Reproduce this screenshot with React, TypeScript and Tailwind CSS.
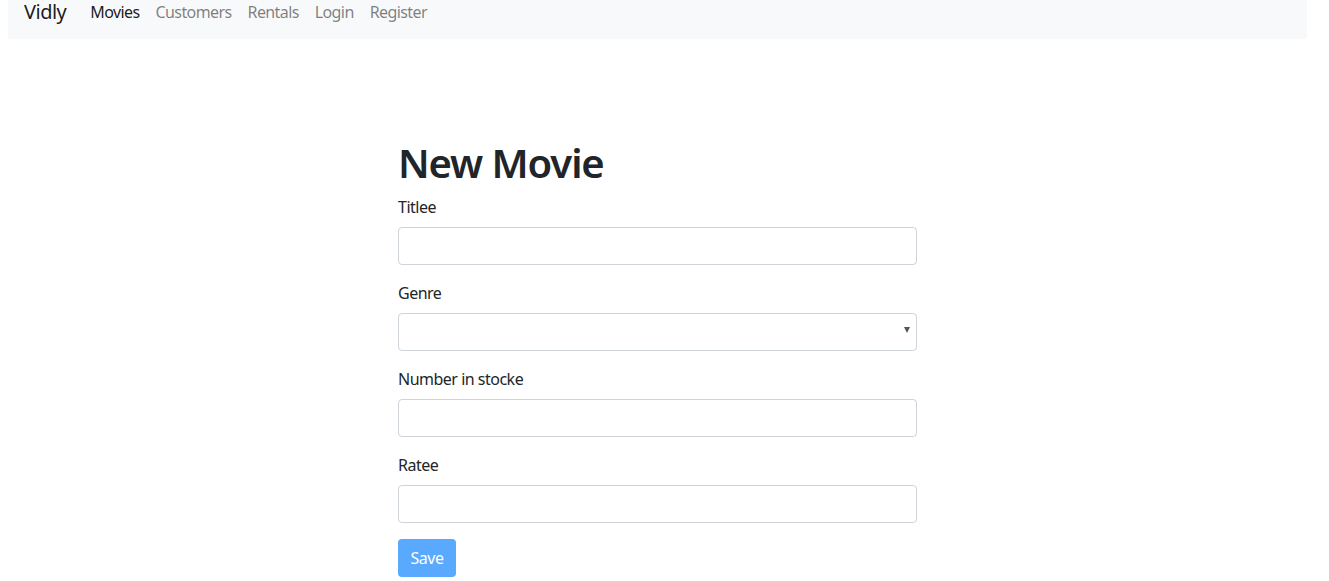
import React from 'react';

const fields = [
  { label: 'Titlee', type: 'input' },
  { label: 'Genre', type: 'select' },
  { label: 'Number in stocke', type: 'input' },
  { label: 'Ratee', type: 'input' },
];

export default function App() {
  return (
    <div className="min-h-[581px] bg-white text-[#212529] font-['Noto_Sans',sans-serif] tracking-[-0.5px] overflow-hidden">
      {/* Navbar (page is scrolled down a bit, only its lower part shows) */}
      <nav className="ml-2 w-[1299px] h-[39px] bg-[#f8f9fa] px-4">
        <div className="flex items-center h-6">
          <span className="text-[20px] leading-6 text-black/90 mr-4">Vidly</span>
          <ul className="flex items-center text-[16px] leading-6 tracking-[-0.6px]">
            <li className="px-2 text-black/90">Movies</li>
            <li className="px-2 text-black/50">Customers</li>
            <li className="px-2 text-black/50">Rentals</li>
            <li className="px-2 text-black/50">Login</li>
            <li className="px-2 text-black/50">Register</li>
          </ul>
        </div>
      </nav>

      <main className="ml-[398px] w-[519px] pt-[100px]">
        <h1 className="text-[40px] leading-[48px] font-semibold tracking-[-1.1px] mb-2">New Movie</h1>
        <form>
          {fields.map((f) => (
            <div key={f.label} className="mb-4">
              <label className="block text-[16px] leading-6 mb-2">{f.label}</label>
              {f.type === 'select' ? (
                <div className="relative">
                  <select className="appearance-none w-full h-[38px] border border-[#ced4da] rounded-[4px] bg-white px-3 outline-none" />
                  <span className="absolute right-[7px] top-[14px] w-0 h-0 border-l-[3.5px] border-r-[3.5px] border-t-[6px] border-l-transparent border-r-transparent border-t-[#555]" />
                </div>
              ) : (
                <input className="w-full h-[38px] border border-[#ced4da] rounded-[4px] bg-white px-3 outline-none" />
              )}
            </div>
          ))}
          <button
            type="button"
            className="h-[38px] w-[58px] rounded-[4px] bg-[#59a9ff] text-white text-[16px] leading-6"
          >
            Save
          </button>
        </form>
      </main>
    </div>
  );
}
